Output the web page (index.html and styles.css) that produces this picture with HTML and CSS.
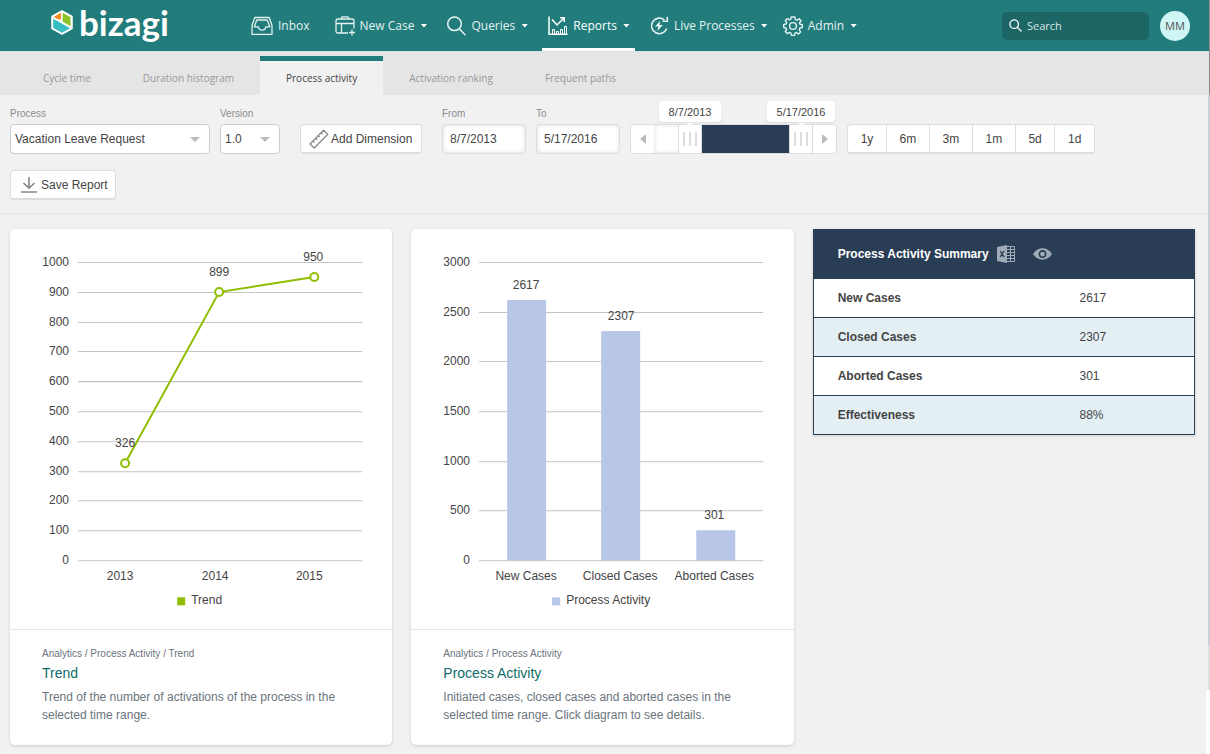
FILE: index.html
```html
<!DOCTYPE html>
<html lang="en">
<head>
<meta charset="utf-8">
<meta name="viewport" content="width=device-width, initial-scale=1">
<title>Bizagi - Process activity</title>
<link rel="stylesheet" href="styles.css">
</head>
<body>
<header class="topbar">
  <a class="brand" href="#" aria-label="bizagi">
    <svg class="brand-mark" viewBox="0 0 22 25" aria-hidden="true">
      <path d="M11 1 21 6.500V18.500L11 24 1 18.500V6.500Z" fill="#fff" stroke="#fff" stroke-width="1.500" stroke-linejoin="round"/>
      <path d="M10 2.800V9.200L7.600 9.500 2.600 6.900Z" fill="#f08a1d"/>
      <path d="M11.600 2.800 19.600 7.200V16.300L11.600 11.600Z" fill="#8fc32e"/>
      <path d="M2.200 8.700 19.200 18.300 11 22.700 2.200 17.900Z" fill="#35bdc0"/>
    </svg>
    <span class="brand-name">bizagi</span>
  </a>
  <nav class="menu" aria-label="Main">
    <a class="menu-item menu-item-plain" href="#">
      <svg class="icon-wide" viewBox="0 0 22 22" fill="none" stroke="currentColor" stroke-width="1.300" stroke-linejoin="round"><path d="M1 19.300V10.500L3.800 2.500H18.200L21 10.500V19.300Z"/><path d="M3.300 11.800 5.800 5H16.200L18.700 11.800H14.700C14.700 16.200 7.300 16.200 7.300 11.800Z"/></svg>
      Inbox
    </a>
    <a class="menu-item" href="#">
      <svg class="icon" viewBox="0 0 20 20" fill="none" stroke="currentColor" stroke-width="1.300" stroke-linejoin="round"><path d="M13 17H3Q1 17 1 15V5Q1 3 3 3H17Q19 3 19 5V12.500M6 3 7 .8H13L14 3M1 7.500H19M6.500 7.500V17M17 13.500V19.500M14 16.500H20"/></svg>
      New Case <span class="caret"></span>
    </a>
    <a class="menu-item" href="#">
      <svg class="icon-narrow" viewBox="0 0 19 20" fill="none" stroke="currentColor" stroke-width="1.500" stroke-linecap="round"><circle cx="7.500" cy="7.800" r="6.800"/><path d="M12.500 13 18 18.700"/></svg>
      Queries <span class="caret"></span>
    </a>
    <a class="menu-item menu-item-active" href="#" aria-current="page">
      <svg class="icon" viewBox="0 0 20 20" fill="none" stroke="currentColor"><path d="M1 .5V18.300H19.500" stroke-width="1.500"/><path d="M4.500 18V13.500H6.500V18M8.500 18V15.500H10.500V18M12.500 18V13.500H14.500V18M16.500 18V10.500H18.500V18"/><path d="M4 3.500 9 9 15.500 2.500M12 1.800H16.200V6" stroke-width="1.500"/></svg>
      Reports <span class="caret"></span>
    </a>
    <a class="menu-item menu-item-live" href="#">
      <svg class="icon-narrow" viewBox="0 0 19 20" fill="none" stroke="currentColor" stroke-width="1.600"><path d="M14.500 4A7.800 7.800 0 1 0 16.700 12.500"/><path d="M17.300 .8V5.300H12.500"/><path d="M10.300 4.800 5 10.500H8.300L7.500 15 12.800 9H9.500Z" fill="currentColor" stroke="none"/></svg>
      Live Processes <span class="caret"></span>
    </a>
    <a class="menu-item" href="#">
      <svg class="icon" viewBox="0 0 20 20" fill="none" stroke="currentColor" stroke-width="1.400" stroke-linejoin="round"><circle cx="10" cy="10" r="3.400"/><path d="M8.200 1H11.800L12.400 3.600 14 4.300 16.200 2.700 18 5 16.400 7 17 8.300 19.400 8.800V11.500L16.900 12 16.300 13.700 17.600 16 15.500 18 13.400 16.500 12 17.100 11.500 19.400H8.500L8 17.100 6.400 16.400 4.300 17.600 2.300 15.500 3.600 13.500 3 12 .7 11.500V8.500L3.100 8 3.700 6.500 2.300 4.500 4.500 2.500 6.400 3.900 7.700 3.400Z"/></svg>
      Admin <span class="caret"></span>
    </a>
  </nav>
  <label class="search">
    <svg class="search-icon" viewBox="0 0 14 14" fill="none" stroke="currentColor" stroke-width="1.400" stroke-linecap="round"><circle cx="5.600" cy="5.600" r="4.600"/><path d="M9 9 13 13"/></svg>
    <input class="search-input" type="search" placeholder="Search" aria-label="Search">
  </label>
  <button class="avatar" type="button">MM</button>
</header>

<nav class="tabs" aria-label="Reports">
  <a class="tab" href="#">Cycle time</a>
  <a class="tab" href="#">Duration histogram</a>
  <a class="tab tab-active" href="#" aria-current="page">Process activity</a>
  <a class="tab" href="#">Activation ranking</a>
  <a class="tab" href="#">Frequent paths</a>
</nav>

<main class="content">
  <form class="filters">
    <div class="field field-process">
      <label for="process">Process</label>
      <div class="select-box"><select class="control" id="process"><option>Vacation Leave Request</option></select></div>
    </div>
    <div class="field field-version">
      <label for="version">Version</label>
      <div class="select-box"><select class="control" id="version"><option>1.0</option></select></div>
    </div>
    <button class="button button-dimension" type="button">
      <svg class="icon" viewBox="0 0 20 20" fill="none" stroke="#888" stroke-width="1.300" stroke-linejoin="round"><path d="M1 15 14.500 1.200 18.800 5.200 5.200 19Z M4 12 5.500 13.500M6.700 9.300 8.200 10.800M9.300 6.600 10.800 8.100M12 3.800 13.500 5.300"/></svg>
      Add Dimension
    </button>
    <div class="field field-date">
      <label for="from">From</label>
      <input class="control date" id="from" type="text" value="8/7/2013">
    </div>
    <div class="field field-date">
      <label for="to">To</label>
      <input class="control date" id="to" type="text" value="5/17/2016">
    </div>
    <div class="timeline">
      <button class="step" type="button" aria-label="Earlier"><span class="arrow-left"></span></button>
      <div class="track">
        <div class="track-fill"></div>
        <input class="range" type="range" min="0" max="100" value="18" aria-label="Start date">
        <input class="range" type="range" min="0" max="100" value="100" aria-label="End date">
        <output class="bubble bubble-start">8/7/2013</output>
        <output class="bubble bubble-end">5/17/2016</output>
      </div>
      <button class="step" type="button" aria-label="Later"><span class="arrow-right"></span></button>
    </div>
    <div class="periods">
      <button type="button">1y</button>
      <button type="button">6m</button>
      <button type="button">3m</button>
      <button type="button">1m</button>
      <button type="button">5d</button>
      <button type="button">1d</button>
    </div>
    <button class="button button-save" type="button">
      <svg class="icon-small" viewBox="0 0 16 16" fill="none" stroke="#888" stroke-width="1.600"><path d="M8 0V11M2.500 6 8 11.200 13.500 6M0 15H16"/></svg>
      Save Report
    </button>
  </form>

  <div class="board">
    <article class="card">
      <svg class="chart" viewBox="0 0 382 400" role="img" aria-label="Trend">
        <path class="grid-line" d="M68 33.500H352M68 63.500H352M68 93.500H352M68 122.500H352M68 152.500H352M68 182.500H352M68 212.500H352M68 242.500H352M68 271.500H352M68 301.500H352M68 331.500H352"/>
        <g class="axis-y">
          <text x="59" y="37">1000</text><text x="59" y="67">900</text><text x="59" y="97">800</text><text x="59" y="126">700</text><text x="59" y="156">600</text><text x="59" y="186">500</text><text x="59" y="216">400</text><text x="59" y="246">300</text><text x="59" y="275">200</text><text x="59" y="305">100</text><text x="59" y="335">0</text>
        </g>
        <polyline class="trend-line" points="115,234 209,63 304,48"/>
        <g class="trend-dots"><circle cx="115" cy="234" r="4"/><circle cx="209" cy="63" r="4"/><circle cx="304" cy="48" r="4"/></g>
        <g class="axis-x">
          <text x="115" y="218">326</text><text x="209" y="47">899</text><text x="303" y="32">950</text>
          <text x="110" y="351">2013</text><text x="205" y="351">2014</text><text x="299" y="351">2015</text>
        </g>
        <rect class="trend-key" x="167" y="368" width="8" height="8"/>
        <text x="181" y="375">Trend</text>
      </svg>
      <div class="card-text">
        <p class="path">Analytics / Process Activity / Trend</p>
        <h2>Trend</h2>
        <p class="description">Trend of the number of activations of the process in the selected time range.</p>
      </div>
    </article>

    <article class="card">
      <svg class="chart" viewBox="0 0 382 400" role="img" aria-label="Process Activity">
        <path class="grid-line" d="M68 33.500H352M68 83.500H352M68 132.500H352M68 182.500H352M68 232.500H352M68 281.500H352M68 331.500H352"/>
        <g class="axis-y">
          <text x="59" y="37">3000</text><text x="59" y="87">2500</text><text x="59" y="136">2000</text><text x="59" y="186">1500</text><text x="59" y="236">1000</text><text x="59" y="285">500</text><text x="59" y="335">0</text>
        </g>
        <g class="bars"><rect x="96" y="71" width="39" height="260"/><rect x="190" y="102" width="39" height="229"/><rect x="285" y="301" width="39" height="30"/></g>
        <g class="axis-x">
          <text x="115" y="60">2617</text><text x="210" y="91">2307</text><text x="303" y="290">301</text>
          <text x="115" y="351">New Cases</text><text x="209" y="351">Closed Cases</text><text x="303" y="351">Aborted Cases</text>
        </g>
        <rect class="bars" x="141" y="368" width="8" height="8"/>
        <text x="155" y="375">Process Activity</text>
      </svg>
      <div class="card-text">
        <p class="path">Analytics / Process Activity</p>
        <h2>Process Activity</h2>
        <p class="description">Initiated cases, closed cases and aborted cases in the selected time range. Click diagram to see details.</p>
      </div>
    </article>

    <table class="summary">
      <thead>
        <tr><th colspan="2">
          <div class="summary-title">
            Process Activity Summary
            <button class="tool" type="button" aria-label="Export to Excel">
              <svg class="icon-excel" viewBox="0 0 18 18"><path d="M0 2 10 0V18L0 16Z" fill="#a0abb7"/><path d="M10 1.500H17.500V16.500H10M10 4.500H17.500M10 7.500H17.500M10 10.500H17.500M10 13.500H17.500M13.500 1.500V16.500" fill="none" stroke="#a0abb7"/><path d="M3.200 6 7 12M7 6 3.200 12" stroke="#293e55" stroke-width="1.300"/></svg>
            </button>
            <button class="tool" type="button" aria-label="View">
              <svg class="icon-eye" viewBox="0 0 20 12"><path d="M0 6C5-2 15-2 20 6 15 14 5 14 0 6Z" fill="#a0abb7"/><circle cx="10" cy="6" r="3.300" fill="#a0abb7" stroke="#293e55" stroke-width="1.600"/></svg>
            </button>
          </div>
        </th></tr>
      </thead>
      <tbody>
        <tr><th scope="row">New Cases</th><td>2617</td></tr>
        <tr><th scope="row">Closed Cases</th><td>2307</td></tr>
        <tr><th scope="row">Aborted Cases</th><td>301</td></tr>
        <tr><th scope="row">Effectiveness</th><td>88%</td></tr>
      </tbody>
    </table>
  </div>
</main>
<div class="scroll-rail" aria-hidden="true"><span class="scroll-cap"></span><span class="scroll-thumb"></span><span class="scroll-rest"></span><span class="scroll-end"></span></div>
</body>
</html>
```

FILE: styles.css
```css
*,
*::before,
*::after {
  box-sizing: border-box;
}

body {
  margin: 0;
  min-height: 100vh;
  position: relative;
  background: #f1f1f1;
  color: #444;
  font: 12px/18px "Liberation Sans", Arial, sans-serif;
}

a {
  color: inherit;
  text-decoration: none;
}

button,
input,
select {
  font: inherit;
  color: inherit;
}

button {
  cursor: pointer;
}

svg {
  display: block;
  flex: none;
  overflow: visible;
}

.icon {
  width: 20px;
  height: 20px;
}

.icon-wide {
  width: 22px;
  height: 22px;
}

.icon-narrow {
  width: 19px;
  height: 20px;
}

.icon-small {
  width: 16px;
  height: 16px;
}

/* Top bar */

.topbar {
  display: flex;
  align-items: center;
  height: 52px;
  padding: 0 20px 0 51px;
  border-bottom: 1px solid #d3e2e2;
  background: #227c7c;
  color: #e4f2f1;
  font-family: "Open Sans", sans-serif;
}

.brand {
  display: flex;
  gap: 6px;
  width: 194px;
  height: 44px;
  color: #fff;
}

.brand-mark {
  width: 22px;
  height: 25px;
  margin-top: 6px;
}

.brand-name {
  font: bold 35px/36px Lato, sans-serif;
}

.menu {
  display: flex;
  gap: 9px;
  height: 100%;
}

.menu-item {
  display: flex;
  align-items: center;
  gap: 5px;
  padding: 0 5px 0 6px;
  border-bottom: 3px solid transparent;
  border-top: 3px solid transparent;
  white-space: nowrap;
}

.menu-item-plain {
  padding-right: 10px;
}

.menu-item-live {
  padding-right: 0;
}

.menu-item-active {
  border-bottom-color: #fff;
  color: #fff;
}

.caret {
  width: 7px;
  height: 4px;
  margin-left: 1px;
  background: #fff;
  clip-path: polygon(0 0, 100% 0, 50% 100%);
}

.search {
  display: flex;
  align-items: center;
  gap: 5px;
  width: 147px;
  height: 28px;
  margin-left: auto;
  padding: 0 7px;
  border-radius: 5px;
  background: #1c6666;
}

.search-icon {
  width: 13px;
  height: 13px;
  color: #fff;
}

.search-input {
  flex: 1;
  min-width: 0;
  padding: 0;
  border: 0;
  outline: 0;
  background: none;
  font-size: 11px;
}

.search-input::placeholder {
  color: #d5e5e5;
  opacity: 1;
}

.avatar {
  width: 30px;
  height: 30px;
  margin-left: 11px;
  padding: 0;
  border: 0;
  border-radius: 50%;
  background: #cff5f4;
  color: #555;
  font-size: 11px;
}

/* Report tabs */

.tabs {
  display: flex;
  height: 43px;
  padding: 4px 0 0 17px;
  background: #e5e5e5;
  color: #999;
  font: 10px/18px "Open Sans", sans-serif;
}

.tab {
  padding: 8px 26px 0;
  border-top: 5px solid transparent;
}

.tab-active {
  border-top-color: #227c7c;
  background: #f1f1f1;
  color: #444;
}

/* Filters */

.filters {
  display: flex;
  flex-wrap: wrap;
  align-items: flex-end;
  gap: 16px 10px;
  padding: 10px 15px 13px 10px;
  border-bottom: 1px solid #e5e5e5;
}

.field label {
  display: block;
  height: 19px;
  color: #8c8c8c;
  font-size: 10px;
}

.field-process {
  width: 200px;
}

.field-version {
  width: 60px;
}

.field-date {
  width: 84px;
}

.select-box {
  position: relative;
}

.select-box::after {
  content: "";
  position: absolute;
  top: 13px;
  right: 10px;
  border: 5px solid transparent;
  border-top-color: #bbb;
  border-bottom: 0;
  pointer-events: none;
}

.control {
  display: block;
  appearance: none;
  width: 100%;
  height: 30px;
  padding: 0 4px;
  border: 1px solid #ccc;
  border-radius: 4px;
  background: #fff;
}

.date {
  padding: 0 7px;
  border: 1px solid #ddd;
  box-shadow: inset 0 0 4px #ddd;
}

.button {
  display: flex;
  align-items: center;
  height: 30px;
  border: 1px solid #ddd;
  border-bottom-width: 2px;
  border-radius: 4px;
  background: #fff;
  white-space: nowrap;
}

.button-dimension {
  gap: 2px;
  width: 122px;
  margin: 0 10px;
  padding: 0 8px;
}

.button-save {
  gap: 4px;
  width: 106px;
  padding: 0 10px;
}

/* Timeline slider */

.timeline {
  display: flex;
  width: 207px;
  height: 30px;
  border: 1px solid #ddd;
  border-radius: 4px;
  background: #fff;
}

.step {
  display: grid;
  place-items: center;
  width: 23px;
  padding: 0;
  border: 0;
  background: none;
}

.arrow-left,
.arrow-right {
  border: 5px solid transparent;
}

.arrow-left {
  border-right: 6px solid #bbb;
  border-left: 0;
}

.arrow-right {
  border-left: 6px solid #bbb;
  border-right: 0;
}

.track {
  position: relative;
  flex: 1;
  box-shadow: inset 0 0 4px #ddd;
}

.track-fill {
  position: absolute;
  inset: 0 24px 0 46px;
  background: #293e55;
}

.range {
  position: absolute;
  inset: 0;
  appearance: none;
  width: 100%;
  height: 28px;
  margin: 0;
  background: none;
  pointer-events: none;
}

.range::-webkit-slider-thumb {
  appearance: none;
  width: 24px;
  height: 28px;
  border: 1px solid #ddd;
  border-width: 0 1px;
  background:
    linear-gradient(#ddd, #ddd) 4px 7px / 2px 14px no-repeat,
    linear-gradient(#ddd, #ddd) 10px 7px / 2px 14px no-repeat,
    linear-gradient(#ddd, #ddd) 16px 7px / 2px 14px no-repeat,
    #fff;
  pointer-events: auto;
}

.bubble {
  position: absolute;
  top: -24px;
  padding: 2px 10px 1px;
  border-radius: 4px;
  background: #fff;
  box-shadow: 0 1px 1px #ddd;
  font-size: 11px;
  white-space: nowrap;
}

.bubble::after {
  content: "";
  position: absolute;
  top: 100%;
  left: 50%;
  margin-left: -4px;
  border: 4px solid transparent;
  border-top: 0;
  border-bottom-color: #fff;
}

.bubble-start {
  left: 36px;
  transform: translateX(-50%);
}

.bubble-end {
  right: 12px;
  transform: translateX(50%);
}

.periods {
  display: flex;
  width: 248px;
  height: 30px;
  border: 1px solid #ddd;
  border-bottom-width: 2px;
  border-radius: 4px;
  background: #fff;
}

.periods button {
  flex: 1 1 auto;
  padding: 0;
  border: 0;
  background: none;
}

.periods button + button {
  border-left: 1px solid #ddd;
}

/* Report board */

.board {
  display: grid;
  grid-template-columns: repeat(3, 1fr);
  align-items: start;
  gap: 19px;
  padding: 15px 15px 9px 10px;
}

.card {
  border-radius: 5px;
  background: #fff;
  box-shadow: 0 1px 3px #ccc;
}

.chart {
  width: 100%;
  height: auto;
  fill: #444;
}

.grid-line {
  fill: none;
  stroke: #c4c4c4;
}

.axis-y {
  text-anchor: end;
}

.axis-x {
  text-anchor: middle;
}

.trend-line {
  fill: none;
  stroke: #8fbe00;
  stroke-width: 2px;
}

.trend-dots {
  fill: #fff;
  stroke: #8fbe00;
  stroke-width: 2px;
}

.trend-key {
  fill: #8fbe00;
}

.bars {
  fill: #b8c6e8;
}

.card-text {
  padding: 15px 32px 21px;
  border-top: 1px solid #e5e5e5;
  color: #6a747c;
}

.card-text p {
  margin: 0;
}

.card-text .path {
  font-size: 10px;
}

.card-text h2 {
  margin: 1px 0 6px;
  color: #0f6b6b;
  font-size: 14px;
  font-weight: 400;
  line-height: 18px;
}

/* Summary table */

.summary {
  width: 100%;
  border: 1px solid #293e55;
  border-collapse: collapse;
  background: #fff;
  box-shadow: 0 1px 3px #ccc;
}

.summary th,
.summary td {
  height: 39px;
  padding: 0 0 0 24px;
  text-align: left;
}

.summary td {
  width: 139px;
}

.summary tbody tr {
  border-top: 1px solid #293e55;
}

.summary tbody tr:nth-child(even) {
  background: #e4eff4;
}

.summary thead th {
  height: 49px;
  background: #293e55;
  color: #fff;
}

.summary-title {
  display: flex;
  align-items: center;
  gap: 8px;
}

.tool {
  padding: 0;
  border: 0;
  background: none;
}

.tool + .tool {
  margin-left: 10px;
}

.icon-excel {
  width: 18px;
  height: 18px;
}

.icon-eye {
  width: 19px;
  height: 12px;
}

/* Right-hand scroll rail */

.scroll-rail {
  position: absolute;
  top: 0;
  right: 0;
  bottom: 0;
  display: flex;
  flex-direction: column;
  align-items: flex-end;
  width: 4px;
}

.scroll-cap {
  width: 1px;
  height: 95px;
  background: #8c8c8c;
}

.scroll-thumb {
  flex: 1;
  width: 2px;
  background: #c9cfd4;
}

.scroll-rest {
  width: 2px;
  height: 45px;
  background: #dfdfdf;
}

.scroll-end {
  width: 4px;
  height: 64px;
  background: #fff;
}
```
